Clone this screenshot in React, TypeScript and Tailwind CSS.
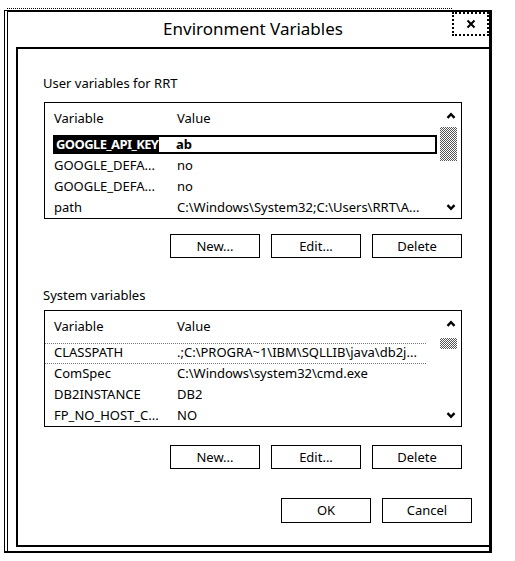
import React from "react";

function ChevronUp() {
  return (
    <svg width="10" height="7" viewBox="0 0 10 7">
      <polyline points="1.5,5.8 5,2.2 8.5,5.8" fill="none" stroke="#000" strokeWidth="2.4" />
    </svg>
  );
}

function ChevronDown() {
  return (
    <svg width="10" height="7" viewBox="0 0 10 7">
      <polyline points="1.5,1.2 5,4.8 8.5,1.2" fill="none" stroke="#000" strokeWidth="2.4" />
    </svg>
  );
}

function Btn({ label, wide }: { label: string; wide?: boolean }) {
  return (
    <div
      className={
        wide
          ? "w-[90px] h-[25px] border border-black flex items-center justify-center text-[13px] leading-none"
          : "w-[90px] h-[24px] border border-black flex items-center justify-center text-[13px] leading-none"
      }
    >
      {label}
    </div>
  );
}

type Row = [string, string];

function ListBox({
  rows,
  mode,
  thumbTop,
  thumbHeight,
  headerHeight,
}: {
  rows: Row[];
  mode: "focus" | "dotted";
  thumbTop: string;
  thumbHeight: string;
  headerHeight: string;
}) {
  return (
    <div className="w-[418px] h-[117px] border border-black flex overflow-hidden">
      <div className="flex-1 flex flex-col min-w-0">
        <div className={headerHeight + " flex items-center pl-[9px] text-[13px]"}>
          <span className="w-[123px]">Variable</span>
          <span>Value</span>
        </div>
        {rows.map((r, i) =>
          i === 0 && mode === "focus" ? (
            <div key={i} className="h-[21px] flex items-center">
              <div className="ml-[8px] mr-[3px] flex-1 h-[19px] border-2 border-black flex items-center text-[13px]">
                <span className="w-[121px]">
                  <span className="bg-black text-white px-[1px] font-bold tracking-[-0.6px]">{r[0]}</span>
                </span>
                <span className="font-bold">{r[1]}</span>
              </div>
            </div>
          ) : i === 0 ? (
            <div key={i} className="h-[21px] flex items-center pl-[9px] text-[13px] mr-[14px] border-y border-dotted border-[#777]">
              <span className="w-[123px] truncate">{r[0]}</span>
              <span className="truncate">{r[1]}</span>
            </div>
          ) : (
            <div key={i} className="h-[21px] flex items-center pl-[9px] text-[13px]">
              <span className="w-[123px] truncate">{r[0]}</span>
              <span className="truncate">{r[1]}</span>
            </div>
          )
        )}
      </div>
      <div className="w-[21px] flex flex-col items-center">
        <div className="h-[24px] flex items-center justify-center">
          <ChevronUp />
        </div>
        <div className={thumbTop + " " + thumbHeight + " w-[17px] ml-[-4px] bg-[image:repeating-conic-gradient(#555_0%_25%,#fff_0%_50%)] bg-[length:2px_2px]"} />
        <div className="flex-1" />
        <div className="h-[22px] flex items-center justify-center">
          <ChevronDown />
        </div>
      </div>
    </div>
  );
}

export default function App() {
  const userRows: Row[] = [
    ["GOOGLE_API_KEY", "ab"],
    ["GOOGLE_DEFA...", "no"],
    ["GOOGLE_DEFA...", "no"],
    ["path", "C:\\Windows\\System32;C:\\Users\\RRT\\A..."],
  ];
  const sysRows: Row[] = [
    ["CLASSPATH", ".;C:\\PROGRA~1\\IBM\\SQLLIB\\java\\db2j..."],
    ["ComSpec", "C:\\Windows\\system32\\cmd.exe"],
    ["DB2INSTANCE", "DB2"],
    ["FP_NO_HOST_C...", "NO"],
  ];
  return (
    <div className="w-[515px] h-[561px] bg-white overflow-hidden text-black font-['Noto_Sans',sans-serif]">
      <div className="ml-[7px] mt-[8px] w-[445px] border-t border-dotted border-black" />
      <div className="ml-[4px] mt-[1px] w-[488px] h-[543px] border-l border-t border-r-[3px] border-b-[2px] border-black">
        <div className="ml-[2px] h-full border-l border-t border-black flex flex-col">
          <div className="h-[35px] flex items-start">
            <div className="flex-1 text-center pl-[46px] mt-[7px] text-[17px] leading-[20px]">Environment Variables</div>
            <div className="w-[37px] h-[24px] border-2 border-dotted border-black flex items-center justify-center">
              <svg width="14" height="14" viewBox="0 0 14 14">
                <path d="M3.5 3.5 L10.5 10.5 M10.5 3.5 L3.5 10.5" stroke="#000" strokeWidth="2" fill="none" />
              </svg>
            </div>
          </div>
          <div className="ml-[8px] h-[500px] border-t-2 border-l-2 border-b-2 border-black pl-[26px] flex flex-col">
            <div className="mt-[26px] h-[16px] leading-[16px] text-[13px] -ml-px">User variables for RRT</div>
            <div className="mt-[11px]">
              <ListBox rows={userRows} mode="focus" thumbTop="mt-[0px]" thumbHeight="h-[34px]" headerHeight="h-[31px]" />
            </div>
            <div className="mt-[15px] w-[418px] flex justify-end gap-[11px]">
              <Btn label="New..." />
              <Btn label="Edit..." />
              <Btn label="Delete" />
            </div>
            <div className="mt-[29px] h-[16px] leading-[16px] text-[13px] -ml-px">System variables</div>
            <div className="mt-[7px]">
              <ListBox rows={sysRows} mode="dotted" thumbTop="mt-[3px]" thumbHeight="h-[11px]" headerHeight="h-[32px]" />
            </div>
            <div className="mt-[18px] w-[418px] flex justify-end gap-[11px]">
              <Btn label="New..." />
              <Btn label="Edit..." />
              <Btn label="Delete" />
            </div>
            <div className="mt-[29px] w-[428px] flex justify-end gap-[11px]">
              <Btn label="OK" wide />
              <Btn label="Cancel" wide />
            </div>
          </div>
        </div>
      </div>
    </div>
  );
}
